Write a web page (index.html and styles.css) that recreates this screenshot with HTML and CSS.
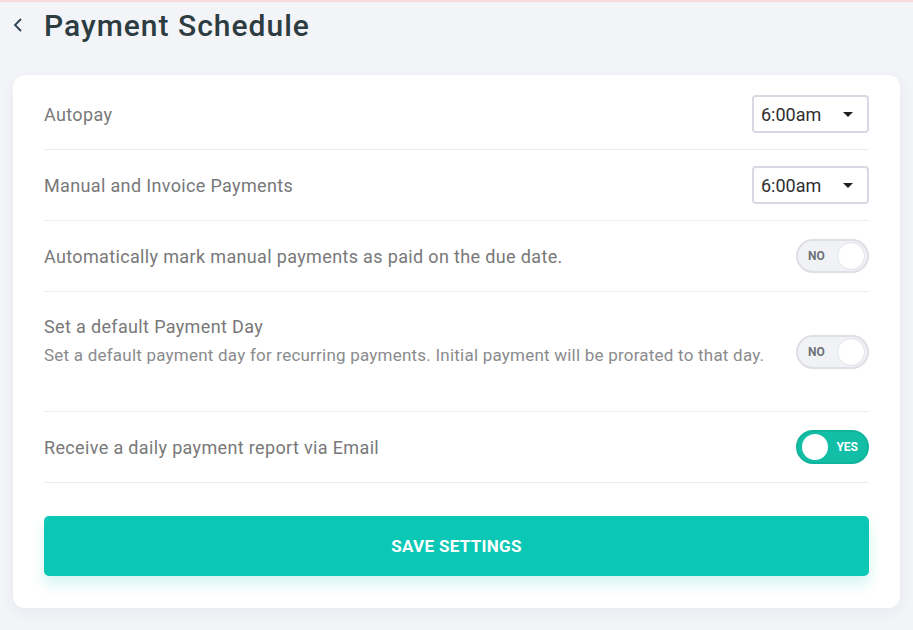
FILE: index.html
```html
<!DOCTYPE html>
<html>
<head>
<meta charset="utf-8">
<link rel="stylesheet" href="styles.css">
</head>
<body>
<div class="topstrip"></div>
<header class="header">
  <svg class="back" width="12" height="16" viewBox="0 0 12 16"><path d="M9 2 L3 8 L9 14" fill="none" stroke="#2b4150" stroke-width="1.8"/></svg>
  <h1 class="title">Payment Schedule</h1>
</header>
<main class="card">
  <div class="row">
    <div class="label">Autopay</div>
    <div class="select"><span>6:00am</span><span class="caret"></span></div>
  </div>
  <div class="row">
    <div class="label">Manual and Invoice Payments</div>
    <div class="select"><span>6:00am</span><span class="caret"></span></div>
  </div>
  <div class="row">
    <div class="label">Automatically mark manual payments as paid on the due date.</div>
    <div class="toggle off"><span class="tlabel">NO</span><span class="knob"></span></div>
  </div>
  <div class="row tall">
    <div class="textblock">
      <div class="label">Set a default Payment Day</div>
      <div class="sub">Set a default payment day for recurring payments. Initial payment will be prorated to that day.</div>
    </div>
    <div class="toggle off"><span class="tlabel">NO</span><span class="knob"></span></div>
  </div>
  <div class="row">
    <div class="label">Receive a daily payment report via Email</div>
    <div class="toggle on"><span class="knob"></span><span class="tlabel">YES</span></div>
  </div>
  <button class="save">SAVE SETTINGS</button>
</main>
</body>
</html>
```
FILE: styles.css
```css
* { box-sizing: border-box; }
html, body { margin: 0; padding: 0; }
body {
  background: #f3f4f8;
  font-family: Roboto, "Liberation Sans", sans-serif;
  width: 913px;
  height: 630px;
  overflow: hidden;
}
.topstrip { height: 2px; background: #f8dcdc; }
.header {
  display: flex;
  align-items: center;
  height: 46px;
  padding-left: 12px;
}
.back { margin-right: 20px; }
.title {
  margin: 0;
  font-size: 30px;
  font-weight: 500;
  color: #2c3c40;
  letter-spacing: 1px;
}
.card {
  margin: 27px 13px 0 13px;
  background: #fff;
  border-radius: 12px;
  padding: 4px 31px 32px 31px;
  box-shadow: 0 4px 14px rgba(60, 70, 110, 0.06);
}
.row {
  display: flex;
  align-items: center;
  justify-content: space-between;
  height: 71px;
  border-bottom: 1px solid #ececf0;
}
.row.tall { height: 120px; }
.row.tall .textblock { align-self: flex-start; padding-top: 23px; }
.label {
  font-size: 18px;
  color: #787879;
  line-height: 24px;
  letter-spacing: 0.35px;
}
.row > .label { padding-top: 1px; }
.sub {
  font-size: 17px;
  color: #8a8b8d;
  line-height: 24px;
  margin-top: 4px;
  letter-spacing: 0.22px;
}
.select {
  width: 117px;
  height: 38px;
  border: 2px solid #d8dae3;
  border-radius: 4px;
  display: flex;
  align-items: center;
  justify-content: space-between;
  padding: 0 14px 0 7px;
  font-size: 18px;
  color: #2f2f2f;
}
.caret {
  width: 0; height: 0;
  border-left: 5px solid transparent;
  border-right: 5px solid transparent;
  border-top: 5px solid #222;
}
.toggle {
  width: 73px;
  height: 34px;
  border-radius: 17px;
  display: flex;
  align-items: center;
  padding: 0 2px;
}
.toggle.off {
  background: #f1f2f6;
  border: 2px solid #dedfe4;
  justify-content: space-between;
  padding-left: 10px;
}
.toggle.on {
  background: #12bea5;
  border: 2px solid #0fb49c;
  justify-content: space-between;
  padding-right: 9px;
}
.knob {
  width: 28px;
  height: 28px;
  border-radius: 50%;
  background: #fff;
  border: 1px solid #e1e2e6;
}
.toggle.on .knob { border: none; width: 26px; height: 26px; margin-left: 2px; }
.tlabel {
  font-size: 12px;
  font-weight: 700;
  color: #6f7277;
}
.toggle.on .tlabel { color: #fff; }
.save {
  display: block;
  width: 100%;
  height: 60px;
  margin-top: 33px;
  border: none;
  border-radius: 5px;
  background: #0bc8b6;
  color: #fff;
  font-family: Roboto, "Liberation Sans", sans-serif;
  font-size: 17px;
  font-weight: 700;
  letter-spacing: 0.3px;
  box-shadow: 0 8px 14px rgba(11, 200, 182, 0.18);
}
```
